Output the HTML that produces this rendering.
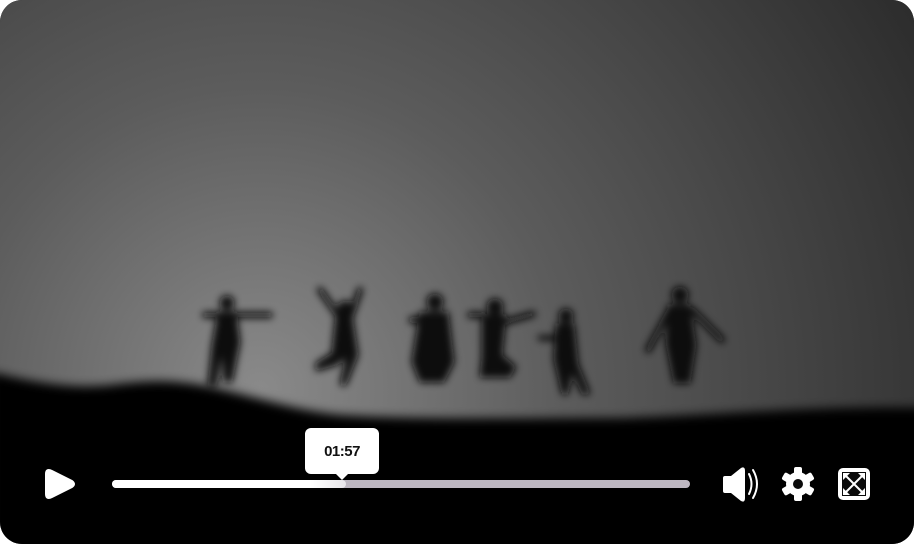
<!DOCTYPE html>
<html><head><style>
html,body{margin:0;padding:0;background:#fff;width:914px;height:544px;overflow:hidden}
.v{position:absolute;left:0;top:0;width:914px;height:544px;border-radius:22px;overflow:hidden;background:#000}
svg{position:absolute;left:0;top:0}
.tip{position:absolute;left:305px;top:428px;width:74px;height:46px;background:#fff;border-radius:6px;font-family:"Liberation Sans",sans-serif;font-weight:bold;font-size:15px;color:#111;text-align:center;line-height:48px;letter-spacing:-0.5px}
.tip:after{content:"";position:absolute;left:31px;bottom:-6px;border:6px solid transparent;border-top-color:#fff;border-bottom:0}
.bar{position:absolute;left:112px;top:480px;width:578px;height:8px;border-radius:4px;background:#bdb7c1}
.fill{position:absolute;left:0;top:0;width:234px;height:8px;border-radius:4px;background:linear-gradient(90deg,#fff 85%,#e8e6ea)}
</style></head><body>
<div class="v">
<svg width="914" height="544" viewBox="0 0 914 544">
<defs>
<radialGradient id="bg" cx="260" cy="390" r="760" gradientUnits="userSpaceOnUse">
<stop offset="0" stop-color="#8a8a8a"/><stop offset="0.4" stop-color="#5c5c5c"/><stop offset="1" stop-color="#2c2c2c"/>
</radialGradient>
<filter id="b" x="-20%" y="-20%" width="140%" height="140%"><feGaussianBlur stdDeviation="4"/></filter>
<filter id="b2"><feGaussianBlur stdDeviation="5"/></filter>
</defs>
<rect width="914" height="544" fill="url(#bg)"/>
<g fill="#080808" filter="url(#b)" stroke="#080808" stroke-linecap="round">
<circle cx="227" cy="303" r="7"/><path d="M218 312h18l4 30-8 40h-8l-2-30-6 34h-8l4-40z"/><path d="M205 315l65 0" stroke-width="6" fill="none"/>
<circle cx="345" cy="308" r="7"/><path d="M336 315h16l6 40-12 30h-6l6-28-10 8-20 6v-8l16-10z"/><path d="M340 318l-20-28M350 318l10-28" stroke-width="6" fill="none"/>
<circle cx="435" cy="302" r="8"/><path d="M420 312h28l6 50-10 20h-24l-8-20z"/><path d="M412 320h16" stroke-width="7"/>
<circle cx="495" cy="307" r="8"/><path d="M482 315h24l-4 40 14 12-6 10h-30l2-20z"/><path d="M470 315h12M505 322l28-8" stroke-width="6"/>
<circle cx="566" cy="316" r="7"/><path d="M556 324h18l4 40 12 30h-8l-10-22-4 22h-6l-8-35z"/><path d="M540 338h18" stroke-width="5"/>
<circle cx="680" cy="295" r="8"/><path d="M668 305h22l6 40-6 38h-16l-8-40z"/><path d="M670 310l-22 40M692 310l30 30" stroke-width="6" fill="none"/>
</g>
<path filter="url(#b2)" fill="#050505" d="M-10 372 C20 378 60 390 110 385 C150 380 170 380 200 385 C240 392 290 410 340 415 C420 420 520 418 620 418 C720 415 820 405 930 408 L930 560 L-10 560 Z"/>
<path d="M46 474 Q46 468 52 471 L72 481 Q76 484 72 487 L52 497 Q46 500 46 494 Z" fill="#fff" stroke="#fff" stroke-width="2" stroke-linejoin="round"/>
<path d="M725 476h6l10-8q4-2 4 3v27q0 5-4 3l-10-8h-6q-2 0-2-2v-13q0-2 2-2z" fill="#fff"/>
<path d="M749 474q5 10 0 20M753 470q8 14 0 28" stroke="#fff" stroke-width="2" fill="none" stroke-linecap="round"/>
<g transform="translate(798,484)" fill="#fff">
<circle r="12"/>
<g><rect x="-4" y="-17" width="8" height="34" rx="2"/><rect x="-4" y="-17" width="8" height="34" rx="2" transform="rotate(60)"/><rect x="-4" y="-17" width="8" height="34" rx="2" transform="rotate(120)"/></g>
<circle r="5" fill="#0a0a0a"/>
</g>
<rect x="838" y="468" width="32" height="32" rx="5" fill="#fff"/>
<rect x="842" y="472" width="24" height="24" fill="#0a0a0a"/>
<path d="M844 474l20 20M864 474l-20 20" stroke="#fff" stroke-width="2"/>
<path d="M843 473h7l-7 7zM865 473h-7l7 7zM843 495h7l-7-7zM865 495h-7l7-7z" fill="#fff"/>
</svg>
<div class="bar"><div class="fill"></div></div>
<div class="tip">01:57</div>
</div>
</body></html>
